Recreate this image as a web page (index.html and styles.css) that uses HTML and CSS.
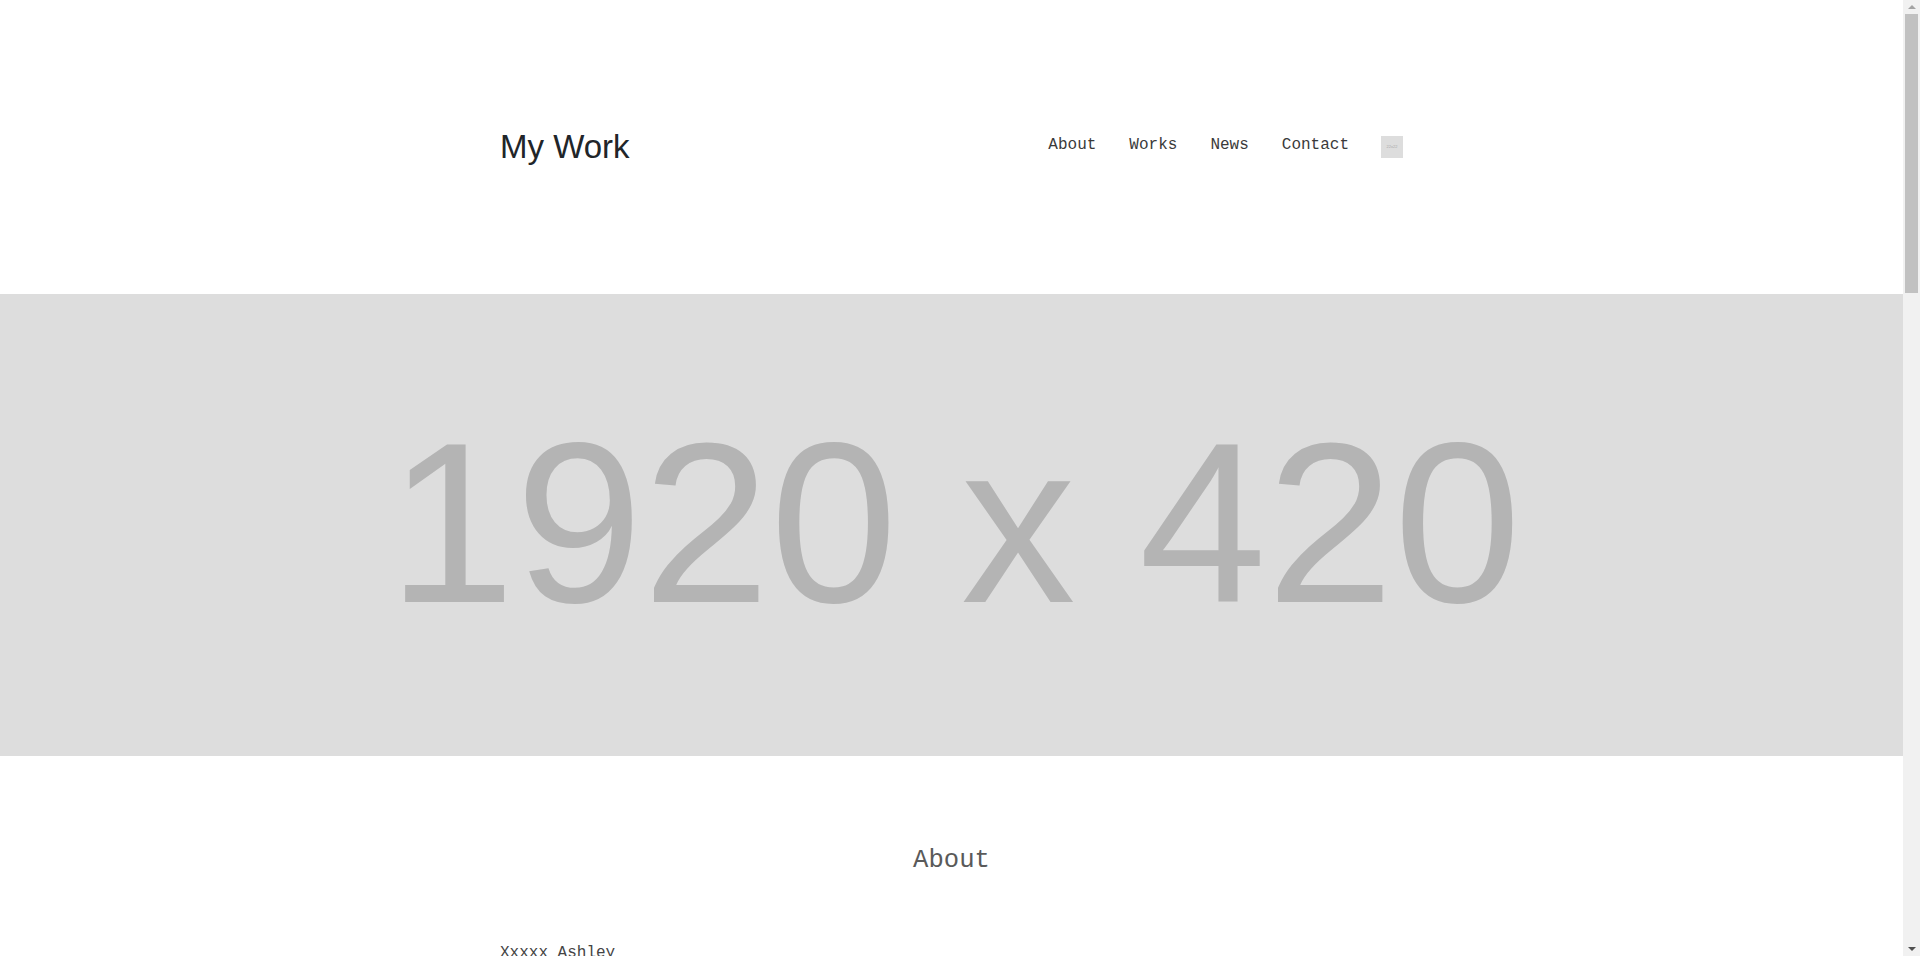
FILE: index.html
```html
<!DOCTYPE html>
<html lang="en">
<head>
<meta charset="utf-8">
<title>My Work</title>
<link rel="stylesheet" href="styles.css">
</head>
<body>
<div class="page">
<header class="site-header">
  <div class="container header-row">
    <a class="brand" href="#">My Work</a>
    <nav class="nav">
      <a class="nav-link" href="#about">About</a>
      <a class="nav-link" href="#works">Works</a>
      <a class="nav-link" href="#news">News</a>
      <a class="nav-link" href="#contact">Contact</a>
      <span class="nav-icon">22x22</span>
    </nav>
  </div>
</header>

<section class="hero">
  <span class="hero-text">1920 x 420</span>
</section>

<section class="section" id="about">
  <h2 class="section-title">About</h2>
  <div class="container about-body">
    <p class="about-name">Xxxxx Ashley</p>
    <p class="about-text">Lorem ipsum dolor sit amet, consectetur adipiscing elit, sed do eiusmod tempor incididunt ut labore et dolore magna aliqua. Ut enim ad minim veniam, quis nostrud exercitation ullamco laboris nisi ut aliquip ex ea commodo consequat.</p>
    <p class="about-text">Duis aute irure dolor in reprehenderit in voluptate velit esse cillum dolore eu fugiat nulla pariatur. Excepteur sint occaecat cupidatat non proident, sunt in culpa qui officia deserunt mollit anim id est laborum.</p>
  </div>
</section>

<section class="section" id="works">
  <h2 class="section-title">Works</h2>
  <div class="container works-grid">
    <div class="work-card">300 x 200</div>
    <div class="work-card">300 x 200</div>
    <div class="work-card">300 x 200</div>
    <div class="work-card">300 x 200</div>
    <div class="work-card">300 x 200</div>
    <div class="work-card">300 x 200</div>
  </div>
</section>

<section class="section" id="news">
  <h2 class="section-title">News</h2>
  <div class="container news-list">
    <p class="news-item">2020.01.01 Lorem ipsum dolor sit amet.</p>
    <p class="news-item">2020.01.01 Lorem ipsum dolor sit amet.</p>
    <p class="news-item">2020.01.01 Lorem ipsum dolor sit amet.</p>
  </div>
</section>

<section class="section" id="contact">
  <h2 class="section-title">Contact</h2>
  <div class="container contact-body">
    <p class="about-text">example@example.com</p>
  </div>
</section>

<footer class="site-footer">
  <small>&copy; My Work</small>
</footer>
</div>

<div class="scrollbar" aria-hidden="true">
  <div class="sb-button"><span class="sb-arrow-up"></span></div>
  <div class="sb-thumb"></div>
  <div class="sb-track"></div>
  <div class="sb-button"><span class="sb-arrow-down"></span></div>
</div>
</body>
</html>
```

FILE: styles.css
```css
html, body {
  margin: 0;
  padding: 0;
}

body {
  font-family: "Liberation Mono", "Courier New", monospace;
  font-size: 16px;
  color: #333;
  background: #fff;
}

.page {
  margin-right: 17px;
}

/* simulated classic scrollbar overlay */
.scrollbar {
  position: fixed;
  top: 0;
  right: 0;
  width: 17px;
  height: 100vh;
  background: #f1f1f1;
  display: flex;
  flex-direction: column;
}

.sb-button {
  height: 14px;
  flex: none;
  display: flex;
  align-items: center;
  justify-content: center;
}

.sb-arrow-up {
  width: 0;
  height: 0;
  border-left: 4px solid transparent;
  border-right: 4px solid transparent;
  border-bottom: 4px solid #a3a3a3;
}

.sb-arrow-down {
  width: 0;
  height: 0;
  border-left: 4px solid transparent;
  border-right: 4px solid transparent;
  border-top: 4px solid #505050;
}

.sb-thumb {
  height: 279px;
  flex: none;
  margin: 0 2px;
  background: #c1c1c1;
}

.sb-track {
  flex: 1;
}

.container {
  width: 903px;
  margin: 0 auto;
}

.site-header {
  height: 294px;
  display: flex;
  align-items: center;
}

.header-row {
  display: flex;
  align-items: center;
  justify-content: space-between;
}

.brand {
  font-family: "Liberation Sans", Arial, sans-serif;
  font-size: 33px;
  color: #212529;
  text-decoration: none;
  line-height: 1.2;
  margin-top: -1px;
}

.nav {
  display: flex;
  align-items: center;
  gap: 33px;
  margin-top: -1px;
}

.nav-link {
  font-size: 16px;
  color: #3a3a3a;
  text-decoration: none;
  line-height: 1.5;
  padding-bottom: 4px;
}

.nav-icon {
  width: 22px;
  height: 22px;
  background: #ddd;
  color: #aaa;
  font-family: "Liberation Sans", Arial, sans-serif;
  font-size: 4px;
  display: flex;
  align-items: center;
  justify-content: center;
  margin-left: -1px;
}

.hero {
  height: 462px;
  background: #dddddd;
  display: flex;
  align-items: center;
  justify-content: center;
}

.hero-text {
  font-family: "Liberation Sans", Arial, sans-serif;
  font-size: 229px;
  line-height: 1;
  color: #b4b4b4;
  transform: translate(3px, -2px);
}

.section {
  padding-top: 90px;
  padding-bottom: 80px;
}

.section-title {
  margin: 0 0 64px;
  text-align: center;
  font-size: 25.6px;
  font-weight: normal;
  line-height: 1.2;
  color: #5a5a5a;
}

.about-name,
.about-text,
.news-item {
  margin: 0 0 16px;
  line-height: 1.5;
  color: #444;
}

.works-grid {
  display: grid;
  grid-template-columns: repeat(3, 1fr);
  gap: 30px;
}

.work-card {
  height: 200px;
  background: #ddd;
  color: #b4b4b4;
  font-family: "Liberation Sans", Arial, sans-serif;
  font-size: 28px;
  display: flex;
  align-items: center;
  justify-content: center;
}

.site-footer {
  padding: 40px 0;
  text-align: center;
  color: #666;
}
```
